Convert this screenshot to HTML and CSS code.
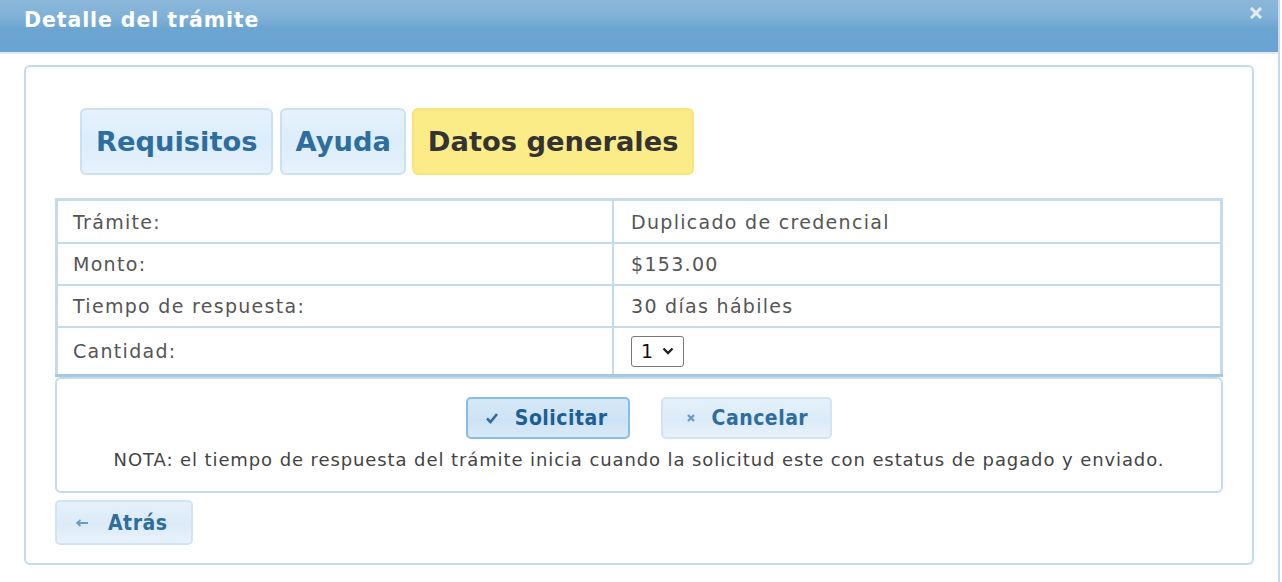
FILE: index.html
```html
<!DOCTYPE html>
<html lang="es">
<head>
<meta charset="utf-8">
<title>Detalle del trámite</title>
<link rel="stylesheet" href="styles.css">
</head>
<body>
<div class="dialog">
  <div class="titlebar">
    <span class="title">Detalle del trámite</span>
    <span class="close" aria-label="cerrar">
      <svg width="12" height="12" viewBox="0 0 12 12"><path d="M2 2 L10 10 M10 2 L2 10" stroke="#e4edf5" stroke-width="3" stroke-linecap="square"/></svg>
    </span>
  </div>
  <div class="content">
    <div class="panel">
      <ul class="tabs">
        <li class="tab first">Requisitos</li>
        <li class="tab">Ayuda</li>
        <li class="tab active">Datos generales</li>
      </ul>
      <table class="data">
        <tr class="top"><td class="label">Trámite:</td><td>Duplicado de credencial</td></tr>
        <tr><td class="label">Monto:</td><td>$153.00</td></tr>
        <tr><td class="label">Tiempo de respuesta:</td><td>30 días hábiles</td></tr>
        <tr class="qty"><td class="label">Cantidad:</td><td><span class="select">1 <svg width="12" height="8" viewBox="0 0 12 8"><path d="M1.5 1.5 L6 6 L10.5 1.5" fill="none" stroke="#222" stroke-width="2.4"/></svg></span></td></tr>
      </table>
      <div class="actions">
        <div class="buttons">
          <button class="btn focus"><svg class="ico" width="14" height="12" viewBox="0 0 14 12"><path d="M2 6.5 L5.5 10 L12 2" fill="none" stroke="#2e6e9e" stroke-width="2.6"/></svg>Solicitar</button>
          <button class="btn cancel"><svg class="ico" width="10" height="10" viewBox="0 0 10 10"><path d="M2 2 L8 8 M8 2 L2 8" stroke="#6a9cc6" stroke-width="2.4"/></svg>Cancelar</button>
        </div>
        <p class="nota">NOTA: el tiempo de respuesta del trámite inicia cuando la solicitud este con estatus de pagado y enviado.</p>
      </div>
      <button class="btn back"><svg class="ico" width="14" height="8" viewBox="0 0 14 8"><path d="M1 4 H12 M4.5 1 L1 4 L4.5 7" fill="none" stroke="#6a9cc6" stroke-width="1.8"/></svg>Atrás</button>
    </div>
  </div>
</div>
</body>
</html>
```
FILE: styles.css
```css
html, body {
  margin: 0;
  padding: 0;
  background: #ffffff;
}
body {
  font-family: "DejaVu Sans", Verdana, sans-serif;
  color: #333;
  width: 1282px;
  height: 582px;
  overflow: hidden;
}
.dialog {
  width: 1280px;
  height: 582px;
  border-right: 2px solid #c5dbec;
  box-sizing: border-box;
}
.titlebar {
  position: relative;
  height: 52px;
  background: linear-gradient(to bottom, #8cb8da 0%, #7eb0d7 35%, #6ba5d1 55%, #6aa3cf 100%);
  border-bottom: 2px solid #dfeaf4;
  box-sizing: content-box;
}
.title {
  display: block;
  padding-left: 24px;
  line-height: 40px;
  font-weight: bold;
  font-size: 20.5px;
  color: #ffffff;
  letter-spacing: 0.9px;
}
.close {
  position: absolute;
  right: 16px;
  top: 7px;
  width: 12px;
  height: 12px;
}
.close svg { display: block; }
.content {
  padding: 11px 24px 0 24px;
}
.panel {
  border: 2px solid #c5dbec;
  border-radius: 6px;
  padding: 41px 29px 18px 29px;
  height: 500px;
  box-sizing: border-box;
}
.tabs {
  list-style: none;
  margin: 0 0 23px 0;
  padding: 0 0 0 25px;
  display: flex;
  gap: 6px;
}
.tab {
  height: 67px;
  box-sizing: border-box;
  display: flex;
  align-items: center;
  padding: 0 13px 0 14px;
  font-weight: bold;
  font-size: 27.3px;
  color: #2e6e9e;
  background: linear-gradient(to bottom, #e6f2fd 0%, #dcedfb 50%, #e6f1fb 100%);
  border: 2px solid #cde0f0;
  border-radius: 6px;
}
.tab.first { margin-right: 1px; }
.tab.active {
  background: #fcec88;
  border-color: #fbe27a;
  color: #333333;
}
.data {
  width: 100%;
  border-collapse: collapse;
  border: 3px solid #c5dbec;
  border-bottom-color: #a6c9e2;
  font-size: 19px;
  color: #555;
}
.data td {
  border: 2px solid #c5dbec;
  padding: 0 0 0 17px;
  height: 40px;
  letter-spacing: 1.3px;
}
.data td.label { width: 539px; padding-left: 15px; }
.data tr.top td { height: 41px; }
.data tr.qty td { height: 46px; }
.select {
  display: inline-flex;
  align-items: center;
  gap: 9px;
  height: 31px;
  width: 53px;
  padding: 0 6px 0 9px;
  border: 1px solid #777;
  border-radius: 3px;
  color: #111;
  font-size: 19px;
  letter-spacing: 0;
  box-sizing: border-box;
  vertical-align: middle;
}
.actions {
  margin-top: 0;
  border: 2px solid #c5dbec;
  border-radius: 6px;
  height: 116px;
  box-sizing: border-box;
  padding-top: 18px;
  text-align: center;
}
.buttons {
  display: flex;
  justify-content: center;
  gap: 31px;
  padding-left: 20px;
}
.btn {
  display: inline-flex;
  align-items: center;
  gap: 16px;
  height: 42px;
  padding: 0 20px 0 17px;
  font-family: "DejaVu Sans Condensed", "DejaVu Sans", sans-serif;
  font-stretch: condensed;
  font-weight: bold;
  font-size: 21px;
  letter-spacing: 0.5px;
  color: #2e6e9e;
  background: linear-gradient(to bottom, #e4f1fb 0%, #dcebf8 55%, #e8f2fb 100%);
  border: 2px solid #d2e4f3;
  border-radius: 5px;
  cursor: pointer;
}
.btn.focus {
  background: linear-gradient(to bottom, #d6e8f7 0%, #cde3f5 55%, #d8e9f7 100%);
  border-color: #86bde8;
  color: #1d5e94;
}
.btn.cancel {
  padding-left: 23px;
  padding-right: 22px;
}
.ico { display: block; }
.nota {
  margin: 10px 0 0 0;
  font-size: 18px;
  color: #444;
  letter-spacing: 0.9px;
}
.back {
  margin-top: 7px;
  height: 45px;
  padding: 0 24px 0 19px;
  gap: 18px;
}
```
